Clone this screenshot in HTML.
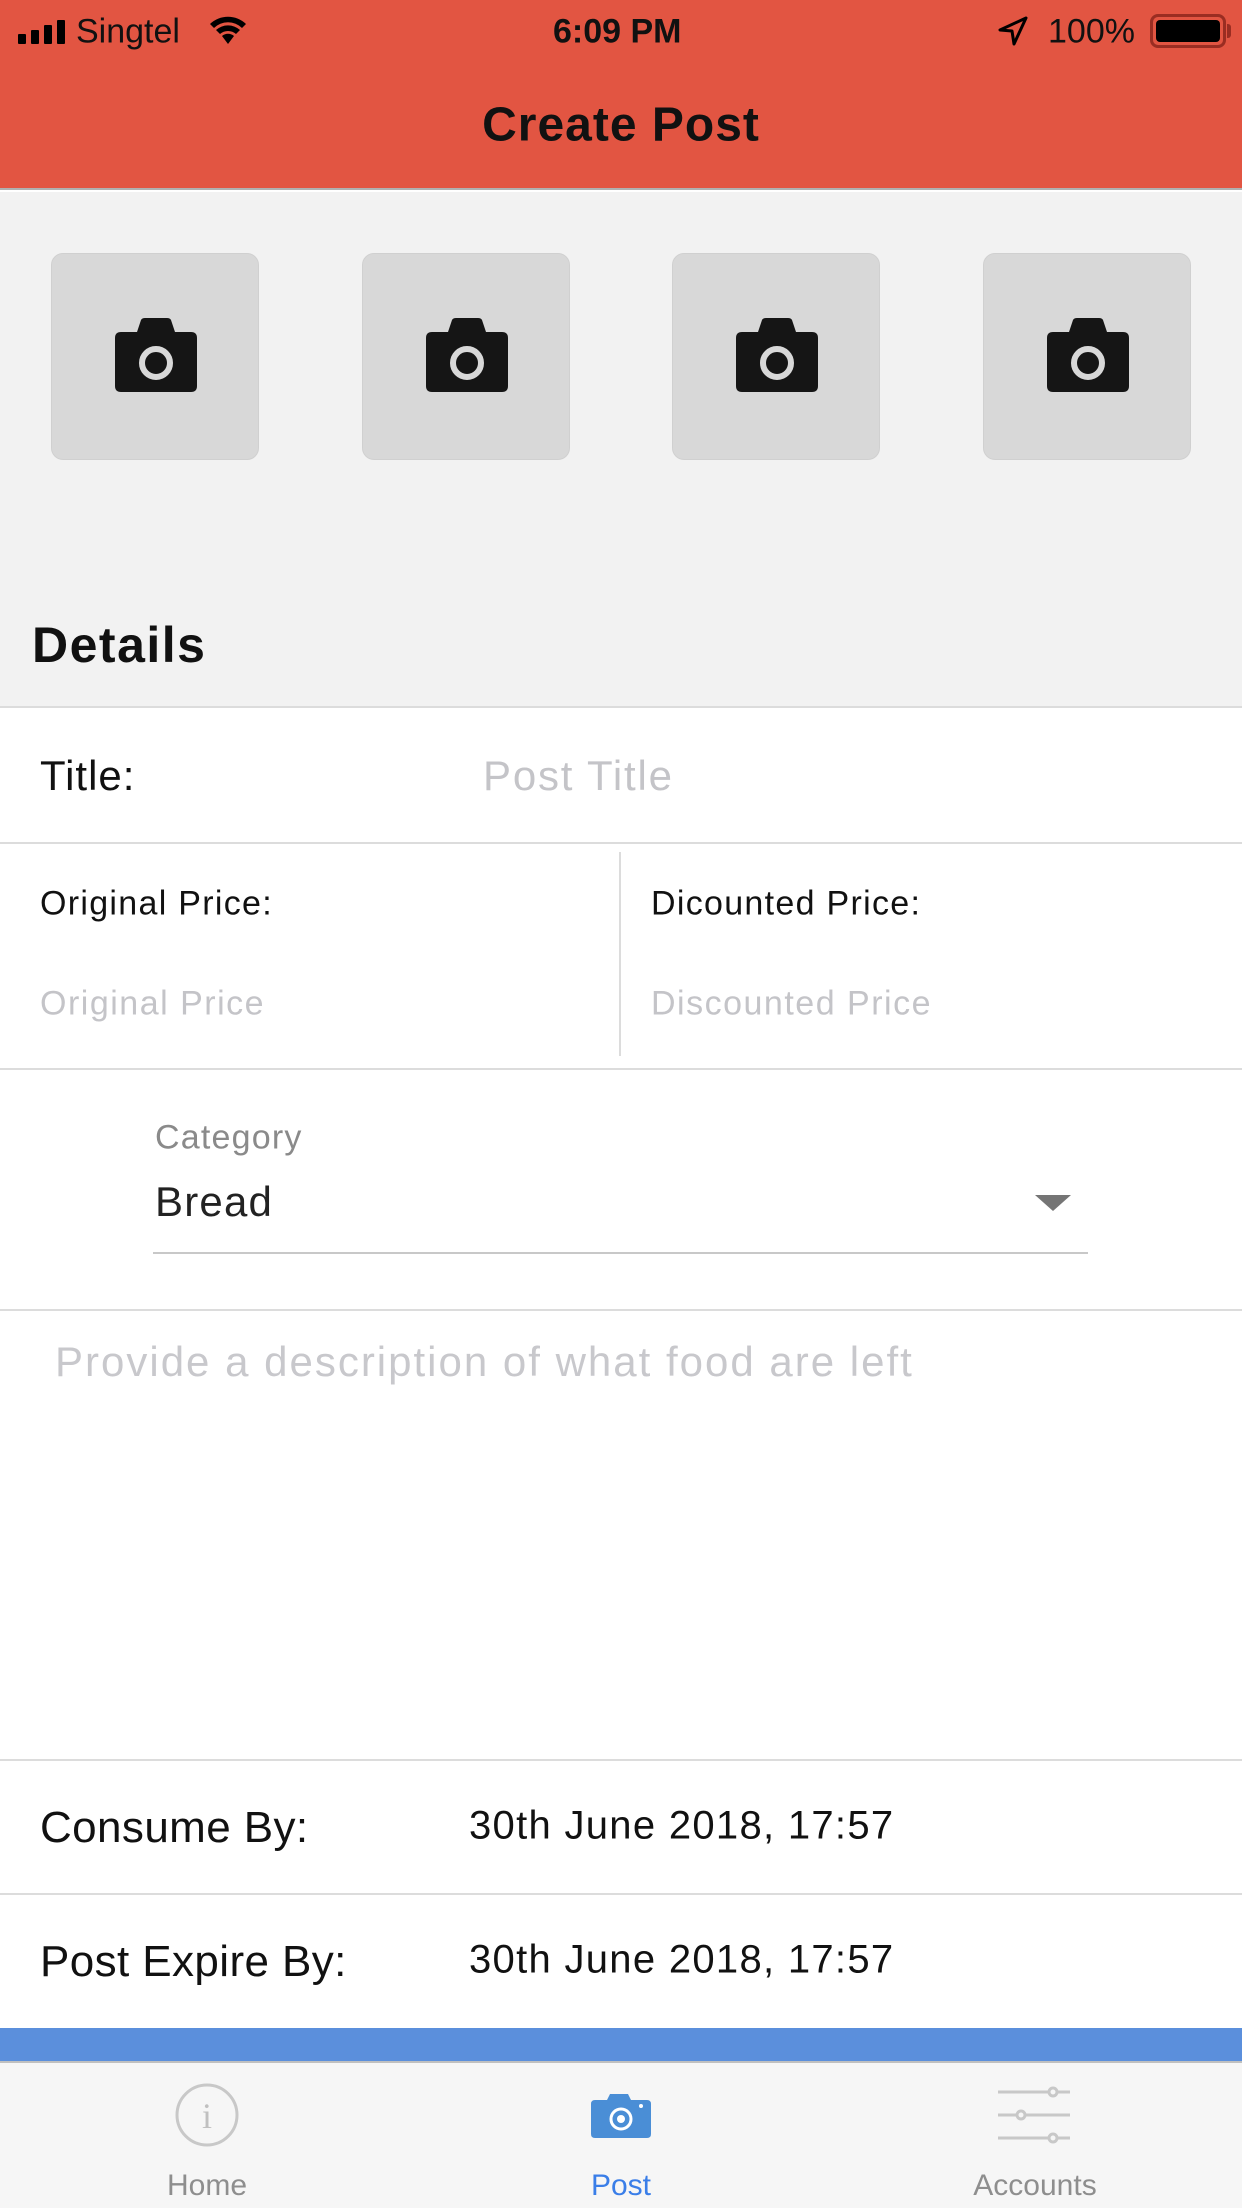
<!DOCTYPE html>
<html><head><meta charset="utf-8"><style>
*{margin:0;padding:0;box-sizing:border-box}
body{width:1242px;height:2208px;position:relative;overflow:hidden;background:#fff;font-family:"Liberation Sans",sans-serif;color:#111}
.a{position:absolute}
.t{position:absolute;white-space:nowrap;transform:translateY(-50%)}
.line{position:absolute;left:0;width:1242px;height:2px;background:#dcdcdc}
.box{position:absolute;top:253px;width:208px;height:207px;background:#d8d8d8;border-radius:12px;border:1px solid #d0d0d0}
.box svg{position:absolute;left:63px;top:64px}
</style></head><body>
<div class="a" style="left:0;top:0;width:1242px;height:190px;background:#e25542;border-bottom:2px solid #b0b0b0"></div>
<div class="a" style="left:18px;top:20px">
<svg width="50" height="24"><rect x="0" y="14" width="8" height="10" rx="1"/><rect x="13" y="10" width="8" height="14" rx="1"/><rect x="26" y="5" width="8" height="19" rx="1"/><rect x="39" y="0" width="8" height="24" rx="1"/></svg></div>
<div class="t" style="left:76px;top:32px;font-size:34px">Singtel</div>
<svg class="a" style="left:208px;top:14px" width="40" height="32" viewBox="0 0 40 32"><path d="M2 10 A26 26 0 0 1 38 10 L34 14 A20 20 0 0 0 6 14Z M8 16 A18 18 0 0 1 32 16 L28 20 A12 12 0 0 0 12 20Z M14 22 A9 9 0 0 1 26 22 L20 30Z"/></svg>
<div class="t" style="left:553px;top:32px;font-size:34px;font-weight:bold">6:09 PM</div>
<svg class="a" style="left:998px;top:16px" width="30" height="30" viewBox="0 0 30 30"><path d="M28 2 L2 14 L14 15 L16 28 Z" fill="none" stroke="#000" stroke-width="3" stroke-linejoin="round"/></svg>
<div class="t" style="left:1048px;top:32px;font-size:34px">100%</div>
<div class="a" style="left:1150px;top:14px;width:76px;height:34px;border:3px solid #9a2d22;border-radius:8px;padding:3px"><div style="width:100%;height:100%;background:#000;border-radius:4px"></div></div>
<div class="a" style="left:1227px;top:24px;width:4px;height:14px;background:#9a2d22;border-radius:0 3px 3px 0"></div>
<div class="t" style="left:0;width:1242px;text-align:center;top:125px;font-size:48px;font-weight:bold;letter-spacing:1px">Create Post</div>
<div class="a" style="left:0;top:192px;width:1242px;height:515px;background:#f2f2f2"></div>
<div class="box" style="left:51px"><svg width="82" height="74" viewBox="0 0 82 74"><path d="M6 14 H22 L26 2 Q27 0 30 0 H52 Q55 0 56 2 L60 14 H76 Q82 14 82 20 V68 Q82 74 76 74 H6 Q0 74 0 68 V20 Q0 14 6 14Z" fill="#151515"/><circle cx="41" cy="45" r="14" fill="none" stroke="#d8d8d8" stroke-width="6"/></svg></div>
<div class="box" style="left:362px"><svg width="82" height="74" viewBox="0 0 82 74"><path d="M6 14 H22 L26 2 Q27 0 30 0 H52 Q55 0 56 2 L60 14 H76 Q82 14 82 20 V68 Q82 74 76 74 H6 Q0 74 0 68 V20 Q0 14 6 14Z" fill="#151515"/><circle cx="41" cy="45" r="14" fill="none" stroke="#d8d8d8" stroke-width="6"/></svg></div>
<div class="box" style="left:672px"><svg width="82" height="74" viewBox="0 0 82 74"><path d="M6 14 H22 L26 2 Q27 0 30 0 H52 Q55 0 56 2 L60 14 H76 Q82 14 82 20 V68 Q82 74 76 74 H6 Q0 74 0 68 V20 Q0 14 6 14Z" fill="#151515"/><circle cx="41" cy="45" r="14" fill="none" stroke="#d8d8d8" stroke-width="6"/></svg></div>
<div class="box" style="left:983px"><svg width="82" height="74" viewBox="0 0 82 74"><path d="M6 14 H22 L26 2 Q27 0 30 0 H52 Q55 0 56 2 L60 14 H76 Q82 14 82 20 V68 Q82 74 76 74 H6 Q0 74 0 68 V20 Q0 14 6 14Z" fill="#151515"/><circle cx="41" cy="45" r="14" fill="none" stroke="#d8d8d8" stroke-width="6"/></svg></div>
<div class="t" style="left:32px;top:645px;font-size:50px;font-weight:bold;letter-spacing:1.5px">Details</div>
<div class="line" style="top:706px"></div>
<div class="t" style="left:40px;top:776px;font-size:42px;letter-spacing:1px">Title:</div>
<div class="t" style="left:483px;top:776px;font-size:42px;color:#c4c4c8;letter-spacing:1.8px">Post Title</div>
<div class="line" style="top:842px"></div>
<div class="t" style="left:40px;top:904px;font-size:34px;letter-spacing:1.3px">Original Price:</div>
<div class="t" style="left:40px;top:1004px;font-size:34px;color:#c4c4c8;letter-spacing:1.5px">Original Price</div>
<div class="a" style="left:619px;top:852px;width:2px;height:204px;background:#dcdcdc"></div>
<div class="t" style="left:651px;top:904px;font-size:34px;letter-spacing:1.3px">Dicounted Price:</div>
<div class="t" style="left:651px;top:1004px;font-size:34px;color:#c4c4c8;letter-spacing:1.5px">Discounted Price</div>
<div class="line" style="top:1068px"></div>
<div class="t" style="left:155px;top:1138px;font-size:34px;color:#8a8a8a;letter-spacing:1.2px">Category</div>
<div class="t" style="left:155px;top:1202px;font-size:42px;color:#222;letter-spacing:1.2px">Bread</div>
<svg class="a" style="left:1035px;top:1195px" width="36" height="16"><path d="M0 0 H36 L18 16Z" fill="#757575"/></svg>
<div class="a" style="left:153px;top:1252px;width:935px;height:2px;background:#c8c8c8"></div>
<div class="line" style="top:1309px"></div>
<div class="t" style="left:55px;top:1362px;font-size:42px;color:#c8c8cc;letter-spacing:2px">Provide a description of what food are left</div>
<div class="line" style="top:1759px"></div>
<div class="t" style="left:40px;top:1828px;font-size:44px;letter-spacing:0.4px">Consume By:</div>
<div class="t" style="left:469px;top:1826px;font-size:40px;letter-spacing:1.3px">30th June 2018, 17:57</div>
<div class="line" style="top:1893px"></div>
<div class="t" style="left:40px;top:1962px;font-size:44px;letter-spacing:0.4px">Post Expire By:</div>
<div class="t" style="left:469px;top:1960px;font-size:40px;letter-spacing:1.3px">30th June 2018, 17:57</div>
<div class="a" style="left:0;top:2028px;width:1242px;height:33px;background:#5b8fdc"></div>
<div class="a" style="left:0;top:2061px;width:1242px;height:147px;background:#f6f6f6;border-top:2px solid #c0c0c0"></div>
<svg class="a" style="left:174px;top:2082px" width="66" height="66"><circle cx="33" cy="33" r="30" fill="none" stroke="#c8c8c8" stroke-width="3"/><text x="33" y="46" text-anchor="middle" font-family="Liberation Serif" font-size="36" fill="#c0c0c0">i</text></svg>
<svg class="a" style="left:591px;top:2092px" width="60" height="46" viewBox="0 0 60 46"><path d="M4 8 H16 L19 2 H37 L40 8 H56 Q60 8 60 12 V42 Q60 46 56 46 H4 Q0 46 0 42 V12 Q0 8 4 8Z" fill="#4a8ed6"/><circle cx="30" cy="27" r="10" fill="none" stroke="#fff" stroke-width="3"/><circle cx="30" cy="27" r="4" fill="#fff"/><circle cx="50" cy="14" r="2" fill="#fff"/></svg>
<svg class="a" style="left:998px;top:2086px" width="74" height="58" viewBox="0 0 74 58"><g stroke="#c8c8c8" stroke-width="3" fill="none"><path d="M0 6 H50 M60 6 H72 M0 29 H18 M28 29 H72 M0 52 H50 M60 52 H72"/><circle cx="55" cy="6" r="4"/><circle cx="23" cy="29" r="4"/><circle cx="55" cy="52" r="4"/></g></svg>
<div class="t" style="left:107px;width:200px;text-align:center;top:2186px;font-size:30px;color:#8e8e8e">Home</div>
<div class="t" style="left:521px;width:200px;text-align:center;top:2186px;font-size:30px;color:#3a7ee8">Post</div>
<div class="t" style="left:935px;width:200px;text-align:center;top:2186px;font-size:30px;color:#8e8e8e">Accounts</div>
</body></html>
